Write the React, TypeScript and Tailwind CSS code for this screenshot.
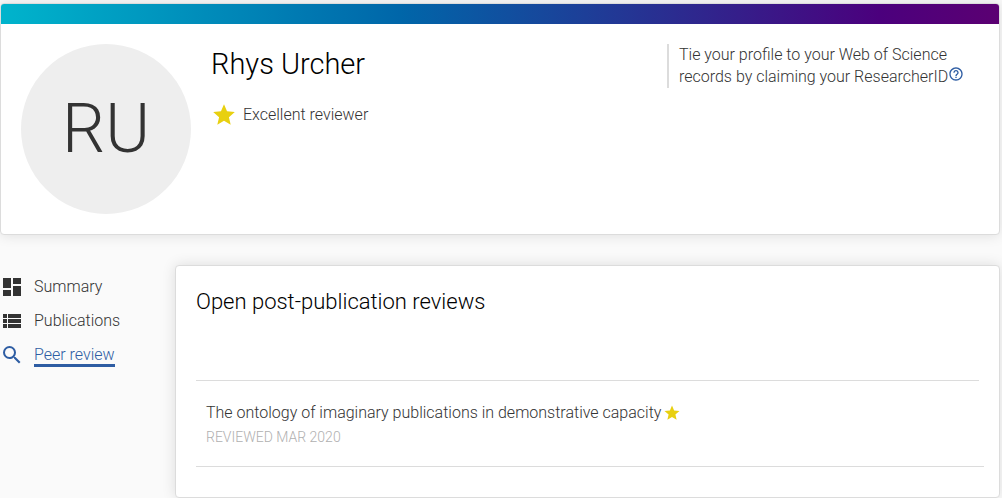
import React from 'react';
import { MdDashboard, MdHelpOutline, MdSearch, MdStar, MdViewList } from 'react-icons/md';

const NAV_ITEMS = [
  { label: 'Summary', icon: MdDashboard, active: false },
  { label: 'Publications', icon: MdViewList, active: false },
  { label: 'Peer review', icon: MdSearch, active: true },
];

const REVIEWS = [
  {
    title: 'The ontology of imaginary publications in demonstrative capacity',
    date: 'Reviewed Mar 2020',
  },
];

const ProfileHeader: React.FC = () => (
  <header className="overflow-hidden rounded border border-[#dcdcdc] bg-white shadow-[0_0_14px_rgba(0,0,0,0.12)]">
    <div className="h-5 bg-[linear-gradient(90deg,#00b4cc_0%,#0066a9_40%,#4b007d_88%,#5b0072_100%)]" />
    <div className="flex items-start gap-5 p-5">
      <div className="flex size-[170px] shrink-0 items-center justify-center rounded-full bg-[#eeeeee] text-[68px] leading-none text-[#333333]">
        RU
      </div>

      <div className="flex-1">
        <h1 className="text-[29px] leading-10 text-black">Rhys Urcher</h1>
        <div className="mt-4.5 flex items-center gap-1.5">
          <MdStar size={26} className="text-[#e8d010]" />
          <span>Excellent reviewer</span>
        </div>
      </div>

      <p className="w-[312px] shrink-0 border-l-2 border-[#dcdcdc] pl-2.5 leading-[22px]">
        Tie your profile to your Web of Science
        <br />
        records by claiming your ResearcherID
        <button type="button" aria-label="About ResearcherID" className="align-top text-[#2e5da3]">
          <MdHelpOutline size={16} />
        </button>
      </p>
    </div>
  </header>
);

const SideNav: React.FC = () => (
  <nav className="w-[175px] shrink-0 pt-[5px]">
    <ul>
      {NAV_ITEMS.map(({ label, icon: Icon, active }) => (
        <li key={label}>
          <a
            href="#"
            className={`flex h-[34px] items-center gap-2.5 ${active ? 'text-[#2e5da3]' : 'text-[#333333]'}`}
          >
            <Icon size={24} />
            <span className={`leading-6 ${active ? 'shadow-[inset_0_-3px_0_#2e5da3]' : ''}`}>{label}</span>
          </a>
        </li>
      ))}
    </ul>
  </nav>
);

const App: React.FC = () => {
  return (
    <div className="min-h-screen bg-[#fafafa] pt-[3px] pr-0.5 font-[Roboto,sans-serif] text-base font-light text-[#333333]">
      <ProfileHeader />

      <div className="mt-[30px] flex">
        <SideNav />

        <main className="flex-1 rounded border border-[#dcdcdc] bg-white px-5 pt-5 pb-[30px] shadow-[0_0_14px_rgba(0,0,0,0.12)]">
          <h2 className="text-[22px] leading-8 text-black">Open post-publication reviews</h2>

          {/* Review list */}
          <hr className="mt-[62px] border-[#dcdcdc]" />
          <ul className="-mr-[5px]">
            {REVIEWS.map((review) => (
              <li key={review.title} className="border-b border-[#dcdcdc] px-2.5 pt-5 pb-4">
                <div className="flex items-center gap-0.5 leading-6">
                  {review.title}
                  <MdStar size={18} className="text-[#e8d010]" />
                </div>
                <div className="text-sm leading-[25px] text-[#b0b0b0] uppercase">{review.date}</div>
              </li>
            ))}
          </ul>
        </main>
      </div>
    </div>
  );
};

export default App;
